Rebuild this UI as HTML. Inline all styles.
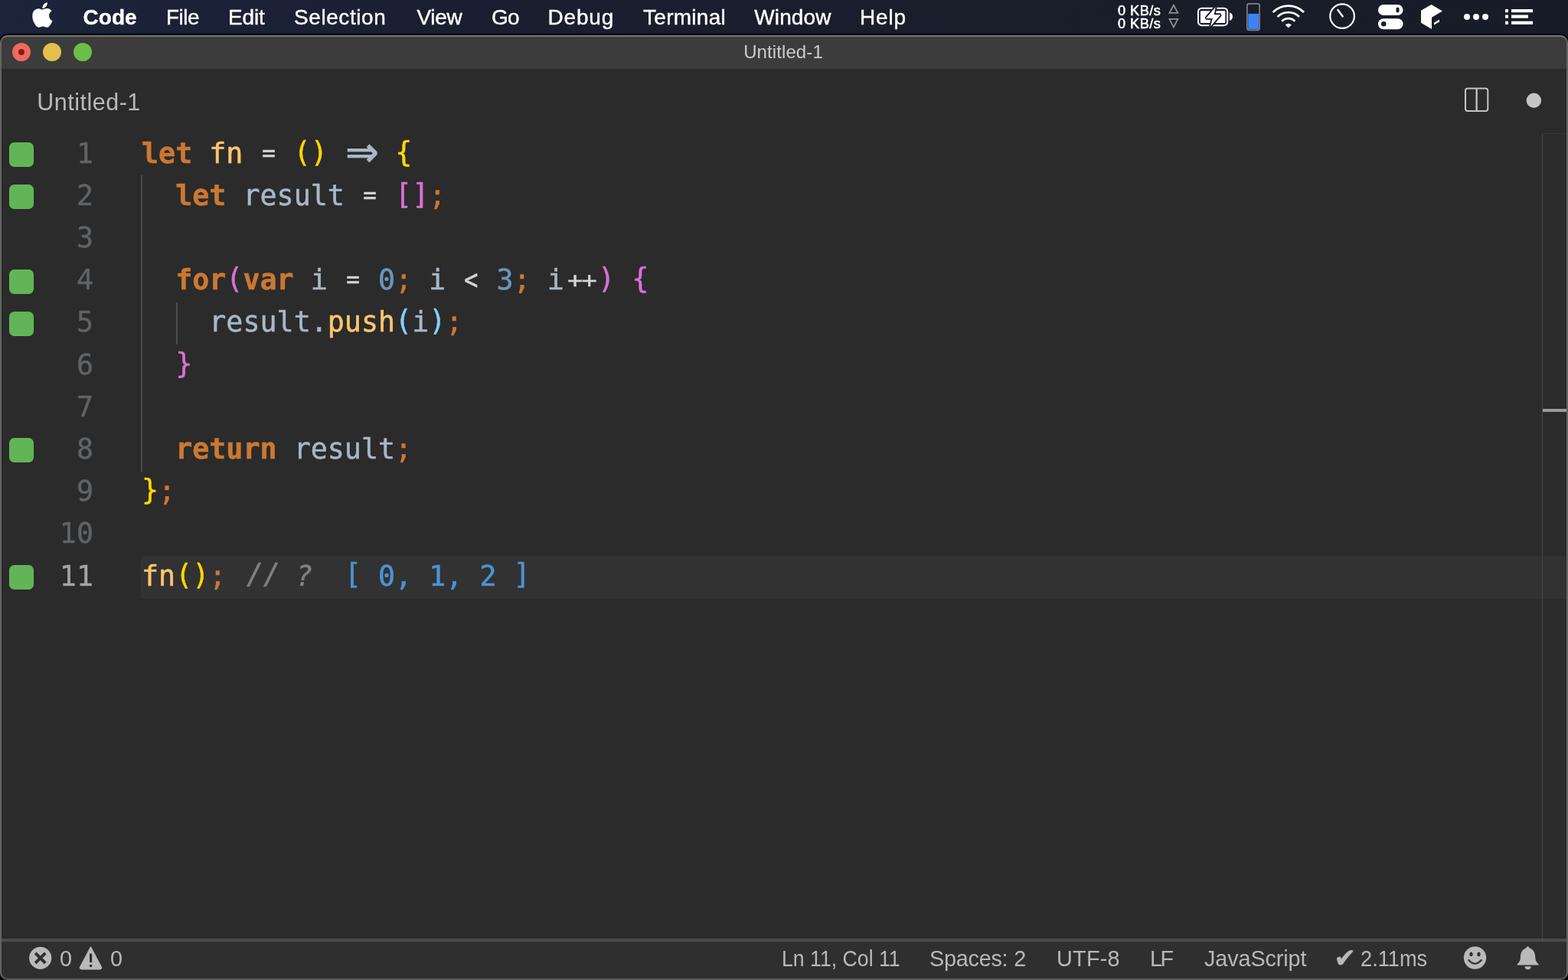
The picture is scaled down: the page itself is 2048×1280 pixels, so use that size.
<!DOCTYPE html>
<html lang="en">
<head>
<meta charset="utf-8">
<title>Untitled-1</title>
<style>
*{box-sizing:border-box;margin:0;padding:0}
html,body{width:2048px;height:1280px;overflow:hidden;background:#000}
body{position:relative;font-family:"Liberation Sans",sans-serif;color:#fff;-webkit-font-smoothing:antialiased}
.abs{position:absolute}
/* ---------- mac menu bar ---------- */
#menubar{will-change:transform;position:absolute;left:0;top:0;width:2048px;height:60px;background:linear-gradient(90deg,#1c253c 0%,#1b2136 14%,#1a1e30 30%,#1a1d2a 62%,#181c29 100%)}
#menubar .mi{position:absolute;top:0.5px;height:44px;line-height:44px;font-size:28px;color:#fff;white-space:nowrap;-webkit-text-stroke:.4px #fff}
#menubar .mi.b{font-weight:bold}
#menubar svg{position:absolute;overflow:visible}
.net{position:absolute;left:1460px;font-size:18.2px;line-height:18px;color:#fff;white-space:nowrap;letter-spacing:.45px;-webkit-text-stroke:.55px #fff}
/* ---------- window ---------- */
#win{will-change:transform;position:absolute;left:0;top:46px;width:2048px;height:1234px;background:#2b2b2b;border-radius:10px;overflow:hidden}
#winshadow{position:absolute;left:0;top:46px;width:2048px;height:1234px;border-radius:10px;box-shadow:0 0 0 1.6px #000,0 -1px 3px 1px rgba(0,0,0,.55)}
#botblack{position:absolute;left:0;top:1240px;width:2048px;height:40px;background:#000}
#winborder{position:absolute;left:0;top:46px;width:2048px;height:1234px;border-radius:10px;border:2px solid #646464;border-top-color:#787878;border-bottom-color:#5c5c5c;pointer-events:none;z-index:50}
#titlebar{position:absolute;left:0;top:0;width:2048px;height:44px;background:#3c3c3c}
#title{position:absolute;left:-1px;letter-spacing:.1px;width:2048px;top:0;height:44px;line-height:44px;text-align:center;font-size:24px;color:#cccccc}
.tl{position:absolute;top:10px;width:24px;height:24px;border-radius:50%}
#tabs{position:absolute;left:0;top:44px;width:2048px;height:84px;background:#2b2b2b}
#tabname{position:absolute;left:48.300px;letter-spacing:.5px;top:0;height:84px;line-height:86px;font-size:30.5px;color:#b9b9b9;white-space:nowrap}
/* ---------- editor ---------- */
#editor{position:absolute;left:0;top:128px;width:2048px;height:1052px;background:#2b2b2b}
.row{position:absolute;left:0;width:2048px;height:55.2px}
.ln{position:absolute;left:0;top:-1.5px;width:122px;text-align:right;color:#606366;-webkit-text-stroke:.4px}
.ln.cur{color:#a4a3a3}
.code{position:absolute;left:185px;top:-1.5px;white-space:pre;-webkit-text-stroke:.5px}
.row,.ln,.code{font-family:"DejaVu Sans Mono","Liberation Mono",monospace;font-size:36.67px;line-height:55.2px}
.cov{position:absolute;left:12px;top:12px;width:32px;height:32px;border-radius:6.5px;background:#62b557}
.guide{position:absolute;width:2.3px;background:#4d4d4d}
.k{color:#cc7832;font-weight:bold}
.f{color:#ffc66d}
.o{color:#d4d4d4}
.v{color:#a9b7c6}
.n{color:#6897bb}
.p{color:#cc7832}
.b1,.b2,.b3{position:relative;top:-2px}
.b1{color:#ffd700}
.b2{color:#da70d6}
.b3{color:#87cefa}
.c{color:#808080;font-style:italic}
.q{color:#4b93d6}
.qb{position:relative;top:-2.500px}
.sl{position:relative;left:4.500px;top:-2.500px}
.qm{position:relative;left:2.500px}
.arrow{display:inline-block;position:relative;width:44.16px;height:30px;vertical-align:top;color:#a9b7c6}
.arrow i{position:absolute;left:0.95px;top:-0.2px;font:bold 53px/53px "DejaVu Sans","Liberation Sans",sans-serif;-webkit-text-stroke:0}
.pp{display:inline-block;width:44.16px;color:#d4d4d4;letter-spacing:-2px;text-indent:1px;transform:translate(1.4px,.5px) scale(.92,.78);transform-origin:50% 51.5%}
.eq{display:inline-block;color:#d4d4d4;transform:translateY(-.7px) scale(.8,.86);transform-origin:50% 52.5%}
.lt{display:inline-block;color:#d4d4d4;transform:translateX(.3px) scaleX(.82)}
/* ---------- status bar ---------- */
#statusline{position:absolute;left:0;top:1180px;width:2048px;height:4px;background:#4b4b4b}
#status{position:absolute;left:0;top:1184px;width:2048px;height:50px;background:#2f2f2f}
#status .si{position:absolute;top:0;height:48px;line-height:44px;font-size:28.8px;color:#b8b8b8;white-space:nowrap}
#status svg{position:absolute;overflow:visible}
</style>
</head>
<body>
<div id="menubar">
  <svg style="left:41.600px;top:1.300px" width="26.650" height="37.100" viewBox="0 0 384 512" preserveAspectRatio="none"><path fill="#fff" d="M318.700 268.700c-.2-36.700 16.400-64.400 50-84.800-18.800-26.900-47.200-41.700-84.700-44.600-35.500-2.800-74.300 20.700-88.500 20.700-15 0-49.400-19.700-76.400-19.700C63.300 141.200 4 184.800 4 273.500q0 39.300 14.400 81.200c12.800 36.700 59 126.700 107.200 125.200 25.200-.6 43-17.900 75.800-17.900 31.800 0 48.300 17.900 76.400 17.900 48.600-.7 90.400-82.500 102.600-119.300-65.200-30.700-61.700-90-61.700-91.900zm-56.600-164.200c27.300-32.400 24.800-61.900 24-72.500-24.100 1.400-52 16.400-67.900 34.900-17.500 19.800-27.800 44.300-25.600 71.900 26.100 2 49.900-11.400 69.500-34.300z"/></svg>
  <div class="mi b" style="left:108.5px;letter-spacing:0.05px">Code</div>
  <div class="mi" style="left:217px;letter-spacing:-0.5px">File</div>
  <div class="mi" style="left:298px;letter-spacing:-0.15px">Edit</div>
  <div class="mi" style="left:384px;letter-spacing:0.58px">Selection</div>
  <div class="mi" style="left:544.5px;letter-spacing:-0.3px">View</div>
  <div class="mi" style="left:642px;letter-spacing:-0.8px">Go</div>
  <div class="mi" style="left:715.5px;letter-spacing:0.8px">Debug</div>
  <div class="mi" style="left:840px;letter-spacing:0.28px">Terminal</div>
  <div class="mi" style="left:985.3px;letter-spacing:0.1px">Window</div>
  <div class="mi" style="left:1123px;letter-spacing:0.85px">Help</div>
  <div class="net" style="top:4.5px">0 KB/s</div>
  <div class="net" style="top:22.3px">0 KB/s</div>

  <!-- network arrows -->
  <svg style="left:0;top:0" width="2048" height="45" viewBox="0 0 2048 45">
    <path d="M1532.900 6.800 L1538.400 16.900 L1527.400 16.900 Z" fill="none" stroke="#8e8e93" stroke-width="1.800" stroke-linejoin="miter"/>
    <path d="M1532.900 35.500 L1538.400 24.800 L1527.400 24.800 Z" fill="none" stroke="#8e8e93" stroke-width="1.800" stroke-linejoin="miter"/>
    <!-- battery -->
    <rect x="1565" y="10.700" width="38.200" height="22.500" rx="4.600" ry="4.600" fill="none" stroke="#fff" stroke-width="2.100"/>
    <path d="M1606 16.600 C1611.300 17.400 1611.300 26.100 1606 26.900 Z" fill="#fff"/>
    <rect x="1567.900" y="14.200" width="32.400" height="15.900" rx="1.200" fill="#fff"/>
    <path d="M1587.600 9.300 L1575 23.900 L1583.800 23.900 L1580.900 34.700 L1594.300 19.200 L1585.700 19.200 Z" fill="#fff" stroke="#1a1d2b" stroke-width="3.800" stroke-linejoin="miter" stroke-miterlimit="2.200" paint-order="stroke"/>
    <!-- memory bar -->
    <rect x="1628.900" y="4.900" width="16.200" height="34.500" rx="2.600" fill="none" stroke="#858588" stroke-width="1.600"/>
    <rect x="1630.200" y="17.900" width="13.800" height="20.200" fill="#3b82f6"/>
    <!-- wifi -->
    <g fill="none" stroke="#fff" stroke-width="2.700" stroke-linecap="butt">
      <path d="M1662.540 15.940 A28.650 28.650 0 0 1 1703.060 15.940"/>
      <path d="M1668.620 22.020 A20.050 20.050 0 0 1 1696.980 22.020"/>
      <path d="M1674.280 27.680 A12.050 12.050 0 0 1 1691.320 27.680"/>
    </g>
    <path d="M1682.800 36.400 L1678.800 32.400 A5.600 5.600 0 0 1 1686.800 32.400 Z" fill="#fff"/>
    <!-- clock -->
    <circle cx="1753.100" cy="21.100" r="15.800" fill="none" stroke="#fff" stroke-width="2.200"/>
    <path d="M1746.900 12.300 L1754.300 22.300" stroke="#fff" stroke-width="2.300" fill="none"/>
    <!-- toggles -->
    <rect x="1800" y="6" width="32.500" height="14" rx="7" fill="#fff"/>
    <rect x="1800" y="24.200" width="32.500" height="14" rx="7" fill="#fff"/>
    <rect x="1823.500" y="9.500" width="4" height="7" rx="2" fill="#1a1d2b"/>
    <circle cx="1807.200" cy="31.200" r="3.300" fill="#1a1d2b"/>
    <!-- cube -->
    <path fill="#fff" d="M1856 13.800 L1869.500 6 L1884 14.500 L1870 22.800 L1870 38 L1856 29.800 Z"/>
    <path fill="#fff" d="M1873 29.700 L1880 25.600 L1880 28.400 L1873 32.500 Z"/>
    <!-- dots -->
    <circle cx="1916" cy="22" r="4" fill="#fff"/><circle cx="1928" cy="22" r="4" fill="#fff"/><circle cx="1940" cy="22" r="4" fill="#fff"/>
    <!-- list -->
    <g fill="#fff">
      <rect x="1966" y="12" width="4" height="4.200"/><rect x="1974" y="12" width="28" height="4.200"/>
      <rect x="1966" y="19.500" width="4" height="4.200"/><rect x="1974" y="19.500" width="22" height="4.200"/>
      <rect x="1966" y="27.700" width="4" height="4.200"/><rect x="1974" y="27.700" width="28" height="4.200"/>
    </g>
  </svg>
</div>

<div id="botblack"></div>
<div id="winshadow"></div>
<div id="win">
  <div id="titlebar">
    <div class="tl" style="left:16px;background:#ee695e"></div>
    <div class="tl" style="left:56px;background:#e1c04c"></div>
    <div class="tl" style="left:96px;background:#6cbf47"></div>
    <div class="abs" style="left:24px;top:18px;width:8px;height:8px;border-radius:50%;background:#8c1a10"></div>
    <div id="title">Untitled-1</div>
  </div>
  <div id="tabs"><div id="tabname">Untitled-1</div>
    <svg class="abs" style="left:0;top:0" width="2048" height="84" viewBox="0 90 2048 84">
      <rect x="1914" y="115.400" width="29.300" height="29.600" rx="3" fill="none" stroke="#c5c5c5" stroke-width="2"/>
      <path d="M1928.650 115.400 V145" stroke="#c5c5c5" stroke-width="2.300" fill="none"/>
      <circle cx="2003.400" cy="131.250" r="9.700" fill="#c5c5c5"/>
    </svg>
  </div>
  <div id="editor">
    <div class="abs" style="left:184px;top:552px;width:1864px;height:55.5px;background:#323232"></div>
    <div class="guide" style="left:184px;top:55px;height:387px"></div>
    <div class="guide" style="left:230px;top:221px;height:55px"></div>
    <div class="row" style="top:0.0px"><div class="cov"></div><div class="ln">1</div><div class="code"><span class="k">let</span> <span class="f">fn</span> <span class="eq">=</span> <span class="b1">()</span> <span class="arrow"><i>⇒</i></span> <span class="b1">{</span></div></div>
    <div class="row" style="top:55.2px"><div class="cov"></div><div class="ln">2</div><div class="code">  <span class="k">let</span> <span class="v">result</span> <span class="eq">=</span> <span class="b2">[]</span><span class="p">;</span></div></div>
    <div class="row" style="top:110.4px"><div class="ln">3</div><div class="code"></div></div>
    <div class="row" style="top:165.6px"><div class="cov"></div><div class="ln">4</div><div class="code">  <span class="k">for</span><span class="b2">(</span><span class="k">var</span> <span class="v">i</span> <span class="eq">=</span> <span class="n">0</span><span class="p">;</span> <span class="v">i</span> <span class="lt">&lt;</span> <span class="n">3</span><span class="p">;</span> <span class="v">i</span><span class="pp">++</span><span class="b2">)</span> <span class="b2">{</span></div></div>
    <div class="row" style="top:220.8px"><div class="cov"></div><div class="ln">5</div><div class="code">    <span class="v">result.</span><span class="f">push</span><span class="b3">(</span><span class="v">i</span><span class="b3">)</span><span class="p">;</span></div></div>
    <div class="row" style="top:276.0px"><div class="ln">6</div><div class="code">  <span class="b2">}</span></div></div>
    <div class="row" style="top:331.2px"><div class="ln">7</div><div class="code"></div></div>
    <div class="row" style="top:386.4px"><div class="cov"></div><div class="ln">8</div><div class="code">  <span class="k">return</span> <span class="v">result</span><span class="p">;</span></div></div>
    <div class="row" style="top:441.6px"><div class="ln">9</div><div class="code"><span class="b1">}</span><span class="p">;</span></div></div>
    <div class="row" style="top:496.8px"><div class="ln">10</div><div class="code"></div></div>
    <div class="row" style="top:552.0px"><div class="cov"></div><div class="ln cur">11</div><div class="code"><span class="f">fn</span><span class="b1">()</span><span class="p">;</span> <span class="c"><span class="sl">//</span> <span class="qm">?</span></span>  <span class="q"><span class="qb">[</span> 0, 1, 2 <span class="qb">]</span></span></div></div>
    <div class="abs" style="left:2014px;top:0;width:1px;height:1052px;background:#484848"></div>
    <div class="abs" style="left:2014px;top:0;width:34px;height:1px;background:#3a3a3a"></div>
    <div class="abs" style="left:2015px;top:360px;width:33px;height:4px;background:#9a9a9a"></div>
  </div>
  <div id="statusline"></div>
  <div id="status">
    <svg style="left:0;top:0" width="2048" height="50" viewBox="0 1230 2048 50">
      <!-- error -->
      <circle cx="52.700" cy="1251.300" r="14.600" fill="#b9b9b9"/>
      <path d="M46.200 1244.800 L59.200 1257.800 M59.200 1244.800 L46.200 1257.800" stroke="#2f2f2f" stroke-width="4" fill="none"/>
      <!-- warning -->
      <path d="M118.500 1236.500 L132.800 1263.500 Q133 1265.800 130.500 1266 L106.500 1266 Q104 1265.800 104.200 1263.500 Z" fill="#b9b9b9" stroke="#b9b9b9" stroke-width="1" stroke-linejoin="round"/>
      <rect x="117" y="1245.500" width="3.200" height="11.500" fill="#2f2f2f"/>
      <rect x="117" y="1260" width="3.200" height="3" fill="#2f2f2f"/>
      <!-- smiley -->
      <circle cx="1926.500" cy="1251" r="14.700" fill="#b9b9b9"/>
      <ellipse cx="1921.500" cy="1246.300" rx="2.100" ry="2.900" fill="#2f2f2f"/>
      <ellipse cx="1931.500" cy="1246.300" rx="2.100" ry="2.900" fill="#2f2f2f"/>
      <path d="M1918.300 1254 Q1926.500 1263.500 1934.700 1254" stroke="#2f2f2f" stroke-width="2.200" fill="none" stroke-linecap="round"/>
      <!-- bell -->
      <path fill="#b9b9b9" d="M1995.600 1236.300 c1.200 0 2 .8 2 2 C2003 1240 2005.300 1244.500 2005.300 1250.500 c0 4 1.500 6 4.300 9 v.9 h-28 v-.9 c2.800 -3 4.300 -5 4.300 -9 C1985.900 1244.500 1988.200 1240 1993.600 1238.300 c0 -1.200 .8 -2 2 -2 Z"/>
      <path fill="#b9b9b9" d="M1991.600 1262.300 h8 a4 4 0 0 1 -8 0 Z"/>
    </svg>
    <div class="si" style="left:78px">0</div>
    <div class="si" style="left:144px">0</div>
    <div class="si" style="left:1020.600px;transform:scaleX(.926);transform-origin:0 50%">Ln 11, Col 11</div>
    <div class="si" style="left:1214px;letter-spacing:-0.24px">Spaces: 2</div>
    <div class="si" style="left:1380px;letter-spacing:0.25px">UTF-8</div>
    <div class="si" style="left:1502px;letter-spacing:-2.5px">LF</div>
    <div class="si" style="left:1573px;letter-spacing:-0.1px">JavaScript</div>
    <div class="si" id="chk" style="left:1742.500px;top:-1px;font-family:'DejaVu Sans','Liberation Sans',sans-serif;font-size:34px;-webkit-text-stroke:.7px #b8b8b8">✔</div>
    <div class="si" style="left:1777px;transform:scaleX(.945);transform-origin:0 50%">2.11ms</div>
  </div>
</div>
<div id="winborder"></div>
</body>
</html>
